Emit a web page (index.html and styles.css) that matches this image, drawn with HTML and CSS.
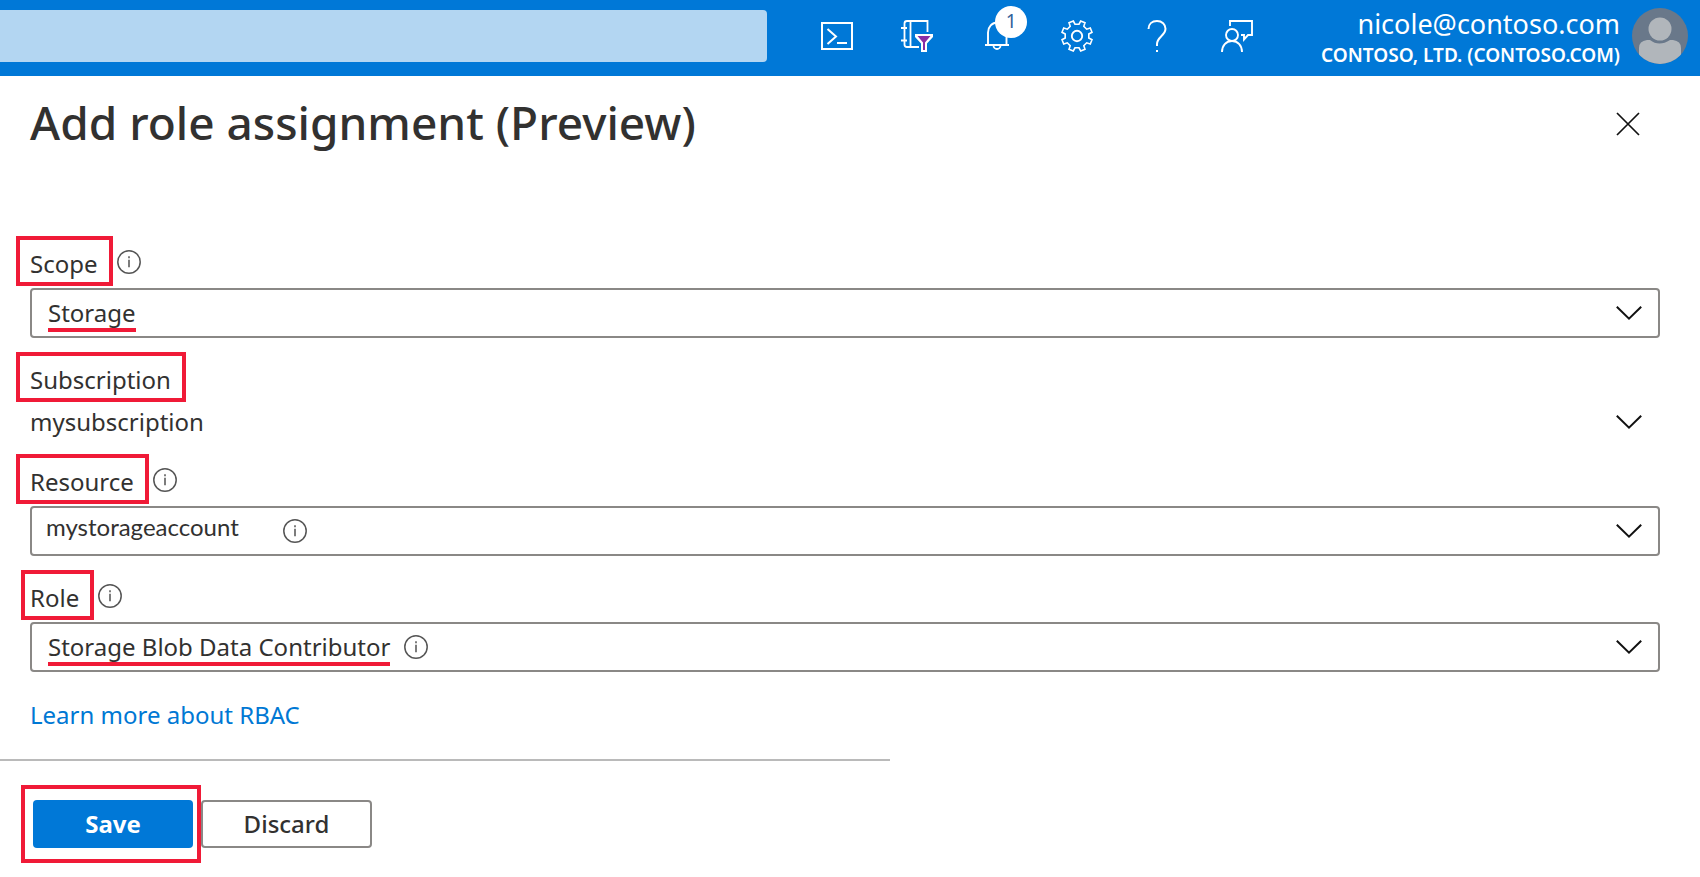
FILE: index.html
```html
<!DOCTYPE html>
<html lang="en">
<head>
<meta charset="utf-8">
<title>Add role assignment (Preview)</title>
<link rel="stylesheet" href="styles.css">
</head>
<body>
<svg class="defs" aria-hidden="true">
  <symbol id="info" viewBox="0 0 24 24"><circle cx="12" cy="12" r="11.2" fill="none" stroke="#555" stroke-width="1.5"/><path d="M12 9.800v7.500M12 6.300v2" stroke="#666" stroke-width="1.700"/></symbol>
  <symbol id="chevron" viewBox="0 0 26 14"><path d="M.8.8 13 12.600 25.200.8" fill="none" stroke="#111" stroke-width="2"/></symbol>
</svg>
<header class="topbar">
  <input class="search" type="text" aria-label="Search resources">
  <nav class="tools" aria-label="Portal tools">
    <button class="tool" type="button" aria-label="Cloud Shell">
      <svg viewBox="0 0 32 32"><path d="M1 3h30v26H1zM6.500 9l8.500 7.500L6.500 24M16 23h10" fill="none" stroke="#fff" stroke-width="2"/></svg>
    </button>
    <button class="tool" type="button" aria-label="Directory and subscription filter">
      <svg viewBox="0 0 32 32"><path d="M26.500 12V1H6Q3.500 1 3.500 3.500v21Q3.500 27 6 27h12M9.500 1v26M0 8h6M0 20.500h6" fill="none" stroke="#fff" stroke-width="1.800"/><path d="M14 14h18v3l-6 6.500V32h-6v-8.500L14 17z" fill="#fff"/><path d="M16.500 16h13L24 22.500V30h-2v-7.500z" fill="#8a2da5"/></svg>
    </button>
    <button class="tool" type="button" aria-label="Notifications">
      <svg viewBox="0 0 32 32"><path d="M4 25h24M7 25V12.500a9.200 10 0 0 1 18.500 0V25" fill="none" stroke="#fff" stroke-width="1.900"/><path d="M12.500 25.500a3.500 3.500 0 0 0 7 0" fill="none" stroke="#fff" stroke-width="1.800"/></svg>
      <span class="count">1</span>
    </button>
    <button class="tool" type="button" aria-label="Settings">
      <svg viewBox="0 0 32 32"><path d="M12.300 1 14 4.200h4L19.700 1l4.300 1.700-1.200 3.600 2.900 2.900 3.600-1.200L31 12.300 27.800 14v4l3.200 1.700-1.700 4.300-3.600-1.200-2.900 2.900 1.200 3.600-4.300 1.700-1.700-3.200h-4L12.300 31 8 29.300l1.200-3.600-2.900-2.900L2.700 24 1 19.700 4.200 18v-4L1 12.300 2.700 8l3.600 1.200 2.900-2.900L8 2.700z" fill="none" stroke="#fff" stroke-width="1.600"/><circle cx="16" cy="16" r="5.200" fill="none" stroke="#fff" stroke-width="1.900"/></svg>
    </button>
    <button class="tool" type="button" aria-label="Help">
      <svg viewBox="0 0 32 32"><path d="M7.500 9C7.500 4 11 1 16 1s8.500 3.300 8.500 7.800c0 3.300-1.700 5-4.200 7.400-2.700 2.600-4.300 4.400-4.300 7.800v2" fill="none" stroke="#fff" stroke-width="2"/><path d="M15 30h2v2h-2z" fill="#fff"/></svg>
    </button>
    <button class="tool" type="button" aria-label="Feedback">
      <svg viewBox="0 0 32 32"><g fill="none" stroke="#fff" stroke-width="1.900"><circle cx="11" cy="15" r="6"/><path d="M1 32c0-6.500 4-11 10-11s10 4.500 10 11M9 6V1h22v14h-4l-4 4.500V15h-3"/></g></svg>
    </button>
  </nav>
  <button class="account" type="button">
    <span class="identity"><span class="email">nicole@contoso.com</span><span class="tenant">CONTOSO, LTD. (CONTOSO.COM)</span></span>
    <svg class="avatar" viewBox="0 0 56 56" aria-hidden="true"><clipPath id="disc"><circle cx="28" cy="28" r="28"/></clipPath><g clip-path="url(#disc)"><path d="M0 0h56v56H0z" fill="#69788a"/><path d="M7 56V40q0-7 8-8h3q9 7 20 0h3q8 1 8 8v16z" fill="#b1b6bb"/><circle cx="28" cy="21" r="11.500" fill="#b1b6bb"/></g></svg>
  </button>
</header>
<main class="panel">
  <div class="heading">
    <h1>Add role assignment (Preview)</h1>
    <button class="close" type="button" aria-label="Close"><svg viewBox="0 0 24 24"><path d="m1 1 22 22M23 1 1 23" stroke="#111" stroke-width="1.700"/></svg></button>
  </div>
  <form class="form">
    <div class="field">
      <div class="caption"><label class="marked" for="scope">Scope</label><svg class="info"><use href="#info"/></svg></div>
      <div class="picker">
        <select id="scope"><option>Storage</option></select>
        <span class="overlay"><span class="underline">Storage</span></span>
        <svg class="chevron"><use href="#chevron"/></svg>
      </div>
    </div>
    <div class="field">
      <div class="caption"><label class="marked" for="subscription">Subscription</label></div>
      <div class="picker plain">
        <select id="subscription"><option>mysubscription</option></select>
        <svg class="chevron"><use href="#chevron"/></svg>
      </div>
    </div>
    <div class="field">
      <div class="caption"><label class="marked" for="resource">Resource</label><svg class="info"><use href="#info"/></svg></div>
      <div class="picker account-name">
        <select id="resource"><option>mystorageaccount</option></select>
        <span class="overlay spaced"><span class="ghost">mystorageaccount</span><svg class="info"><use href="#info"/></svg></span>
        <svg class="chevron"><use href="#chevron"/></svg>
      </div>
    </div>
    <div class="field">
      <div class="caption"><label class="marked narrow" for="role">Role</label><svg class="info"><use href="#info"/></svg></div>
      <div class="picker">
        <select id="role"><option>Storage Blob Data Contributor</option></select>
        <span class="overlay"><span class="underline">Storage Blob Data Contributor</span><svg class="info"><use href="#info"/></svg></span>
        <svg class="chevron"><use href="#chevron"/></svg>
      </div>
    </div>
    <a class="learn" href="#rbac">Learn more about RBAC</a>
    <div class="actions">
      <span class="save-frame"><button class="save" type="submit">Save</button></span>
      <button class="discard" type="button">Discard</button>
    </div>
  </form>
</main>
</body>
</html>
```
FILE: styles.css
```css
* { box-sizing: border-box; }
body { margin: 0; background: #fff; color: #323130; font: 24px/36px "Noto Sans", "Open Sans", sans-serif; }
button, select, input { font: inherit; color: inherit; margin: 0; }
button { cursor: pointer; }
svg { display: block; }
.defs { display: none; }

.topbar { display: flex; align-items: center; min-height: 76px; padding-right: 12px; background: #0078d7; color: #fff; }
.search { flex: 1; min-width: 0; height: 52px; margin-bottom: 4px; padding: 0 16px; border: 0; border-radius: 0 4px 4px 0; background: #b3d6f2; color: #323130; }
.tools { display: flex; gap: 48px; margin: 0 68px 4px 54px; }
.tool { position: relative; width: 32px; height: 32px; padding: 0; border: 0; background: none; }
.tool svg { width: 32px; height: 32px; }
.count { position: absolute; left: 14px; top: -14px; width: 32px; height: 32px; border-radius: 50%; background: #fff; color: #2f6299; font-size: 19px; line-height: 30px; text-align: center; }
.account { display: flex; align-items: center; gap: 12px; padding: 0; margin-bottom: 4px; border: 0; background: none; text-align: right; }
.identity { display: flex; flex-direction: column; padding-top: 6px; }
.email { font-size: 27px; line-height: 32px; }
.tenant { font-size: 19px; line-height: 30px; font-weight: 600; }
.avatar { width: 56px; height: 56px; }

.heading { display: flex; justify-content: space-between; align-items: center; padding: 14px 60px 0 30px; }
h1 { margin: 0; padding-bottom: 4px; font-size: 46px; line-height: 64px; font-weight: 500; }
.close { padding: 0; border: 0; background: none; }
.close svg { width: 24px; height: 24px; }

.form { padding: 78px 40px 0 30px; }
.field + .field { margin-top: 14px; }
.caption { display: flex; align-items: center; gap: 4px; margin-bottom: 2px; }
.marked { margin-left: -14px; padding: 6px 11px 0 10px; border: 4px solid #f01a37; }
.marked.narrow { margin-left: -9px; padding-left: 5px; }
.info { width: 24px; height: 24px; flex: none; }
.caption .info { margin-top: 2px; }
.picker { position: relative; }
.picker select { display: block; width: 100%; height: 50px; padding: 0 60px 0 16px; appearance: none; border: 2px solid #8a8886; border-radius: 4px; background: #fff; }
.picker.plain select { height: 36px; padding-left: 0; border: 0; }
.picker.account-name select { padding-left: 14px; padding-bottom: 8px; }
.picker .chevron { position: absolute; right: 18px; top: 50%; width: 26px; height: 14px; margin-top: -7px; pointer-events: none; }
.overlay { position: absolute; left: 18px; top: 0; height: 50px; display: flex; align-items: center; gap: 14px; color: transparent; pointer-events: none; }
.spaced { gap: 42px; }
.underline { height: 32px; margin-top: 6px; border-bottom: 4px solid #f01a37; line-height: 28px; }
.account-name { font-family: "Lato", "Noto Sans", sans-serif; }
.learn { display: table; margin-top: 25px; color: #0078d4; text-decoration: none; }

.actions { display: flex; align-items: center; width: calc(53% + 26px); margin: 26px 0 0 -30px; padding: 24px 0 0 21px; border-top: 2px solid #bababa; }
.save-frame { padding: 11px 4px 11px 8px; border: 4px solid #f01a37; }
.save { display: block; width: 160px; height: 48px; border: 0; border-radius: 4px; background: #0078d7; color: #fff; font-weight: 700; }
.discard { width: 171px; height: 48px; border: 2px solid #8a8886; border-radius: 4px; background: #fff; font-weight: 500; }
```
